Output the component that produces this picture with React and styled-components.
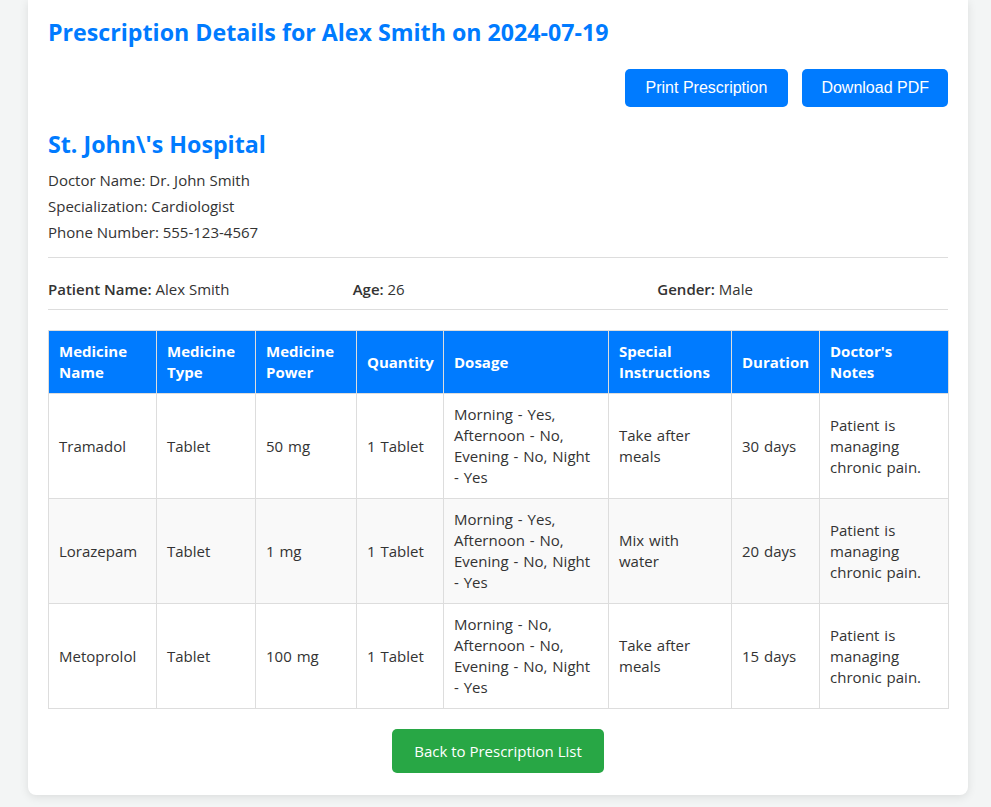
import React from "react";
import styled, { createGlobalStyle } from "styled-components";

const blue = "#007bff";
const font = `"Open Sans", "Noto Sans", sans-serif`;

const GlobalStyle = createGlobalStyle`
  body {
    margin: 0;
    background: #f3f5f5;
    font-family: ${font};
    color: #333;
  }
`;

const medicines = [
  {
    name: "Tramadol",
    type: "Tablet",
    power: "50 mg",
    quantity: "1 Tablet",
    dosage: "Morning - Yes, Afternoon - No, Evening - No, Night - Yes",
    instructions: "Take after meals",
    duration: "30 days",
    notes: "Patient is managing chronic pain.",
  },
  {
    name: "Lorazepam",
    type: "Tablet",
    power: "1 mg",
    quantity: "1 Tablet",
    dosage: "Morning - Yes, Afternoon - No, Evening - No, Night - Yes",
    instructions: "Mix with water",
    duration: "20 days",
    notes: "Patient is managing chronic pain.",
  },
  {
    name: "Metoprolol",
    type: "Tablet",
    power: "100 mg",
    quantity: "1 Tablet",
    dosage: "Morning - No, Afternoon - No, Evening - No, Night - Yes",
    instructions: "Take after meals",
    duration: "15 days",
    notes: "Patient is managing chronic pain.",
  },
];

const columns = [
  { label: "Medicine Name", key: "name", width: 108 },
  { label: "Medicine Type", key: "type", width: 99 },
  { label: "Medicine Power", key: "power", width: 101 },
  { label: "Quantity", key: "quantity", width: 87 },
  { label: "Dosage", key: "dosage", width: 165 },
  { label: "Special Instructions", key: "instructions", width: 123 },
  { label: "Duration", key: "duration", width: 88 },
  { label: "Doctor's Notes", key: "notes", width: 129 },
];

const App = () => {
  return (
    <>
      <GlobalStyle />
      <Page>
        <Card>
          <Title>Prescription Details for Alex Smith on 2024-07-19</Title>
          <Actions>
            <ActionButton>Print Prescription</ActionButton>
            <ActionButton $narrow>Download PDF</ActionButton>
          </Actions>
          <DoctorInfo>
            <Hospital>St. John\'s Hospital</Hospital>
            <InfoLine>Doctor Name: Dr. John Smith</InfoLine>
            <InfoLine>Specialization: Cardiologist</InfoLine>
            <InfoLine>Phone Number: 555-123-4567</InfoLine>
          </DoctorInfo>
          <PatientRow>
            <span>
              <b>Patient Name:</b> Alex Smith
            </span>
            <span>
              <b>Age:</b> 26
            </span>
            <span>
              <b>Gender:</b> Male
            </span>
          </PatientRow>
          <Table>
            <colgroup>
              {columns.map((c) => (
                <col key={c.key} style={{ width: c.width }} />
              ))}
            </colgroup>
            <thead>
              <tr>
                {columns.map((c) => (
                  <Th key={c.key}>{c.label}</Th>
                ))}
              </tr>
            </thead>
            <tbody>
              {medicines.map((m, i) => (
                <Row key={i}>
                  {columns.map((c) => (
                    <Td key={c.key}>{m[c.key]}</Td>
                  ))}
                </Row>
              ))}
            </tbody>
          </Table>
          <Footer>
            <BackButton>Back to Prescription List</BackButton>
          </Footer>
        </Card>
      </Page>
    </>
  );
};

const Page = styled.div`
  padding-left: 5px;
`;
const Card = styled.div`
  width: 940px;
  box-sizing: border-box;
  margin: 0 auto 12px;
  padding: 16px 20px 22px;
  background: #fff;
  border-radius: 0 0 8px 8px;
  box-shadow: 0 2px 10px rgba(0, 0, 0, 0.1);
`;
const Title = styled.h2`
  margin: 0;
  font-size: 23.2px;
  line-height: 32px;
  font-weight: 700;
  color: ${blue};
`;
const Actions = styled.div`
  display: flex;
  justify-content: flex-end;
  gap: 14px;
  margin-top: 21px;
`;
const ActionButton = styled.button`
  height: 38px;
  padding: 0 ${(p) => (p.$narrow ? "19px" : "21px")};
  border: none;
  border-radius: 5px;
  background: ${blue};
  color: #fff;
  font-family: "Liberation Sans", Arial, sans-serif;
  font-size: 16px;
  cursor: pointer;
`;
const DoctorInfo = styled.div`
  padding-bottom: 12px;
  border-bottom: 1px solid #ddd;
`;
const Hospital = styled.h3`
  margin: 22px 0 8px;
  font-size: 23.2px;
  line-height: 30px;
  font-weight: 700;
  color: ${blue};
`;
const InfoLine = styled.p`
  margin: 0;
  font-size: 15px;
  line-height: 26px;
`;
const PatientRow = styled.div`
  display: grid;
  grid-template-columns: repeat(3, 1fr);
  gap: 14px;
  padding: 21px 0 9px;
  border-bottom: 1px solid #ddd;
  font-size: 15px;
  line-height: 21px;
  b {
    font-weight: 600;
  }
`;
const Table = styled.table`
  width: 100%;
  margin-top: 20px;
  border-collapse: collapse;
  table-layout: fixed;
  font-size: 15px;
  line-height: 21px;
`;
const Th = styled.th`
  padding: 10px;
  border: 1px solid #ddd;
  background: ${blue};
  color: #fff;
  font-weight: 700;
  text-align: left;
`;
const Row = styled.tr`
  &:nth-child(even) {
    background: #f9f9f9;
  }
`;
const Td = styled.td`
  padding: 10px;
  border: 1px solid #ddd;
  vertical-align: middle;
  word-spacing: 1px;
`;
const Footer = styled.div`
  display: flex;
  justify-content: center;
  margin-top: 20px;
`;
const BackButton = styled.button`
  height: 44px;
  padding: 0 22px;
  border: none;
  border-radius: 5px;
  background: #28a745;
  color: #fff;
  font-family: ${font};
  font-size: 15px;
  cursor: pointer;
`;

export default App;
